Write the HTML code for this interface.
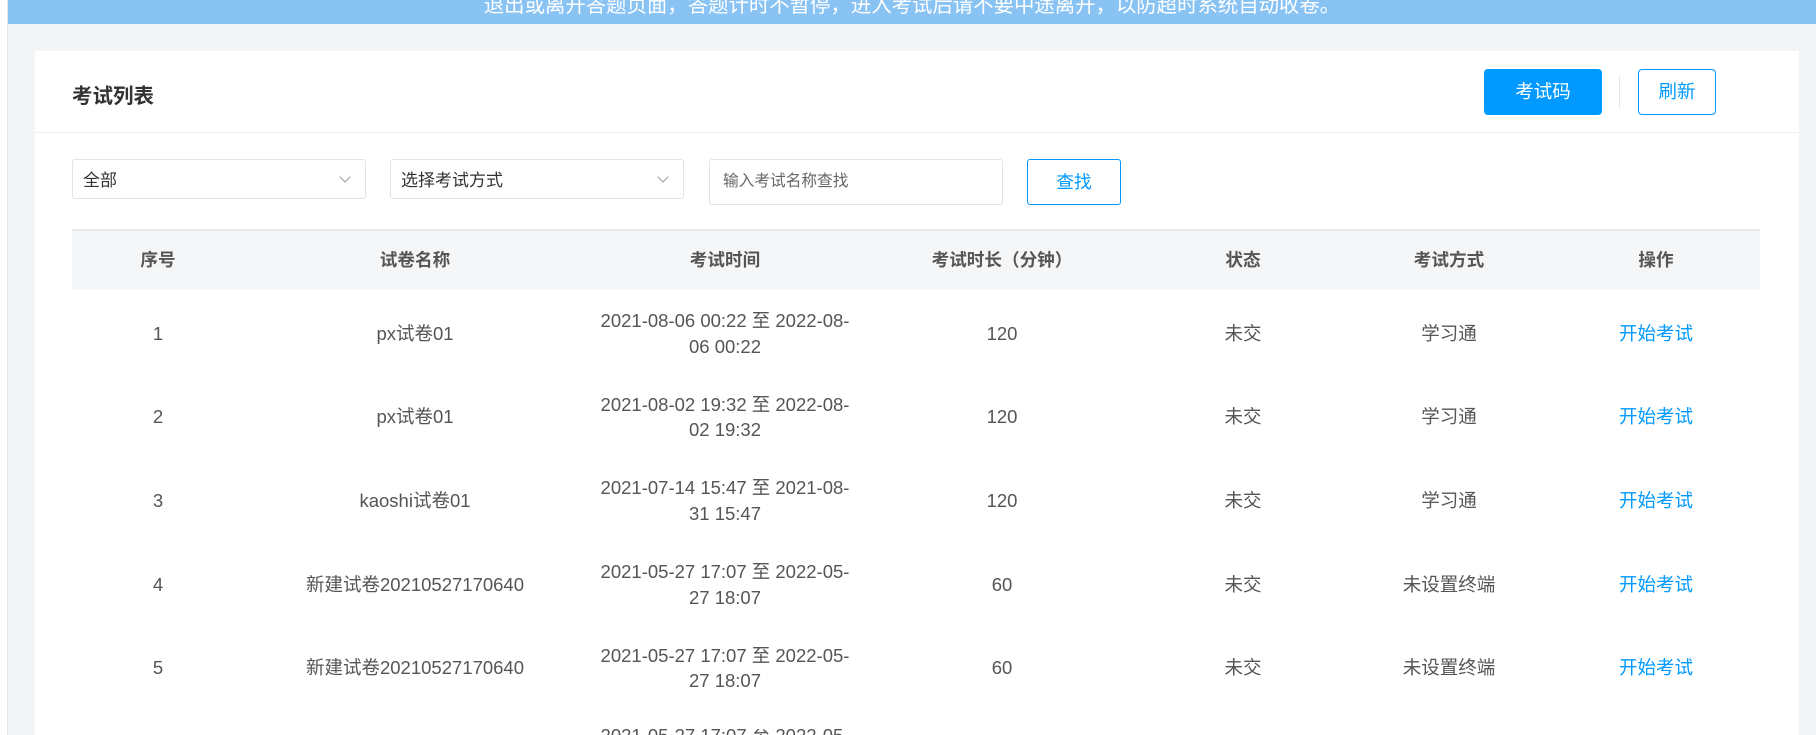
<!DOCTYPE html>
<html style="width:1816px;height:735px;overflow:hidden"><head><meta charset="utf-8"><style>
*{margin:0;padding:0;box-sizing:border-box}
body{width:1816px;height:735px;overflow:hidden;background:#f3f4f5;font-family:"Liberation Sans","Noto Sans CJK SC",sans-serif;color:#555;position:relative}
.wrap{position:absolute;left:0;top:0;width:1816px;height:735px;overflow:hidden}
.leftstrip{position:absolute;left:0;top:0;width:8px;height:735px;background:#fff;border-right:1px solid #e6e6e6}
.banner{position:absolute;left:8px;top:0;width:1808px;height:24px;background:#89c3f4;overflow:hidden}
.banner span{position:absolute;left:0;width:100%;text-align:center;top:-12px;font-size:20.4px;color:#fff;white-space:nowrap}
.card{position:absolute;left:35px;top:51px;width:1764px;height:684px;background:#fff}
.title{position:absolute;left:72px;top:79px;font-size:20.5px;font-weight:bold;color:#333}
.hline{position:absolute;left:35px;top:132px;width:1764px;height:1px;background:#f0f0f0}
.btn1{position:absolute;left:1484px;top:69px;width:118px;height:46px;background:#0099ff;color:#fff;border-radius:4px;font-size:18.5px;text-align:center;line-height:46px}
.vdiv{position:absolute;left:1619px;top:76px;width:1px;height:32px;background:#e6e6e6}
.btn2{position:absolute;left:1638px;top:69px;width:78px;height:46px;border:1px solid #0099ff;color:#0099ff;border-radius:4px;font-size:18.5px;text-align:center;line-height:44px}
.sel{position:absolute;top:159px;height:40px;border:1px solid #e4e4e4;border-radius:3px;font-size:17px;color:#333;line-height:42px;padding-left:10px}
.sel i{position:absolute;right:16px;top:13px;width:8px;height:8px;border-right:1.5px solid #999;border-bottom:1.5px solid #999;transform:rotate(45deg)}
.inp{position:absolute;left:709px;top:159px;width:294px;height:46px;border:1px solid #e4e4e4;border-radius:3px;font-size:15.7px;color:#666;line-height:44px;padding-left:13px}
.find{position:absolute;left:1027px;top:159px;width:94px;height:46px;border:1px solid #0099ff;border-radius:3px;color:#0099ff;font-size:17.7px;text-align:center;line-height:44px}
.thead{position:absolute;left:72px;top:229px;width:1688px;height:61px;background:#f5f6f7;border-top:2px solid #ebebeb;display:flex;font-weight:bold;color:#555;font-size:17.6px}
.row{position:absolute;left:72px;width:1688px;height:83px;display:flex;font-size:18.5px;color:#555}
.c{display:flex;align-items:center;justify-content:center;text-align:center;line-height:25.5px}
.c1{width:172px}.c2{width:342px}.c3{width:278px}.c4{width:276px}.c5{width:206px}.c6{width:206px}.c7{width:208px}
.c3 span{display:block;width:266px}
.a{color:#0099ff}
.last{position:absolute;left:586px;top:729px;width:278px;height:6px;overflow:hidden;font-size:18.5px;line-height:25.5px;text-align:center;color:#555}
.last div{margin-top:-6px}
</style></head><body><div class="wrap">
<div class="leftstrip"></div>
<div class="banner"><span>退出或离开答题页面，答题计时不暂停，进入考试后请不要中途离开，以防超时系统自动收卷。</span></div>
<div class="card"></div>
<div class="title">考试列表</div>
<div class="hline"></div>
<div class="btn1">考试码</div>
<div class="vdiv"></div>
<div class="btn2">刷新</div>
<div class="sel" style="left:72px;width:294px">全部<i></i></div>
<div class="sel" style="left:390px;width:294px">选择考试方式<i></i></div>
<div class="inp">输入考试名称查找</div>
<div class="find">查找</div>
<div class="thead">
<div class="c c1">序号</div><div class="c c2">试卷名称</div><div class="c c3">考试时间</div><div class="c c4">考试时长（分钟）</div><div class="c c5">状态</div><div class="c c6">考试方式</div><div class="c c7">操作</div>
</div>
<div class="row" style="top:292px"><div class="c c1">1</div><div class="c c2">px试卷01</div><div class="c c3"><span>2021-08-06 00:22 至 2022-08-06 00:22</span></div><div class="c c4">120</div><div class="c c5">未交</div><div class="c c6">学习通</div><div class="c c7 a">开始考试</div></div>
<div class="row" style="top:375.5px"><div class="c c1">2</div><div class="c c2">px试卷01</div><div class="c c3"><span>2021-08-02 19:32 至 2022-08-02 19:32</span></div><div class="c c4">120</div><div class="c c5">未交</div><div class="c c6">学习通</div><div class="c c7 a">开始考试</div></div>
<div class="row" style="top:459px"><div class="c c1">3</div><div class="c c2">kaoshi试卷01</div><div class="c c3"><span>2021-07-14 15:47 至 2021-08-31 15:47</span></div><div class="c c4">120</div><div class="c c5">未交</div><div class="c c6">学习通</div><div class="c c7 a">开始考试</div></div>
<div class="row" style="top:543px"><div class="c c1">4</div><div class="c c2">新建试卷20210527170640</div><div class="c c3"><span>2021-05-27 17:07 至 2022-05-27 18:07</span></div><div class="c c4">60</div><div class="c c5">未交</div><div class="c c6">未设置终端</div><div class="c c7 a">开始考试</div></div>
<div class="row" style="top:626.5px"><div class="c c1">5</div><div class="c c2">新建试卷20210527170640</div><div class="c c3"><span>2021-05-27 17:07 至 2022-05-27 18:07</span></div><div class="c c4">60</div><div class="c c5">未交</div><div class="c c6">未设置终端</div><div class="c c7 a">开始考试</div></div>
<div class="last"><div>2021-05-27 17:07 至 2022-05-</div></div>
</div></body></html>
